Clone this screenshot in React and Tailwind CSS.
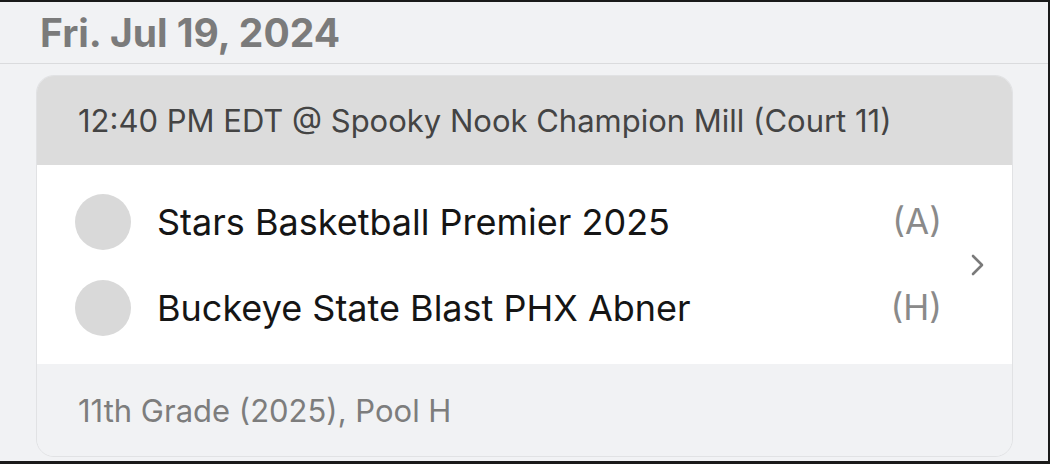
import React from 'react';

const teams = [
  { name: 'Stars Basketball Premier 2025', side: '(A)' },
  { name: 'Buckeye State Blast PHX Abner', side: '(H)' },
];

const App = () => {
  return (
    <div
      className="w-[1050px] h-[464px] bg-[#f1f2f4] border-t-2 border-r-2 border-b-[3px] border-[#1a1a1a] flex flex-col overflow-hidden"
      style={{ fontFamily: 'Inter, "Noto Sans", sans-serif' }}
    >
      {/* Date heading */}
      <div className="h-[62px] flex items-center pl-[40px] border-b border-[#dadbdd]">
        <h2 className="text-[39px] font-bold text-[#7b7b7b] leading-none">Fri. Jul 19, 2024</h2>
      </div>

      {/* Game card */}
      <div className="mt-[11px] ml-[36px] w-[977px] rounded-[18px] border border-[#e1e2e4] overflow-hidden flex flex-col">
        <div className="h-[89px] bg-[#dcdcdc] flex items-center pl-[41px]">
          <span className="text-[31px] text-[#444444] leading-none">12:40 PM EDT @ Spooky Nook Champion Mill (Court 11)</span>
        </div>

        <div className="bg-white flex items-center h-[199px]">
          <div className="flex-1 flex flex-col gap-[30px] pl-[38px]">
            {teams.map((t) => (
              <div key={t.name} className="flex items-center h-[56px]">
                <div className="w-[56px] h-[56px] rounded-full bg-[#d9d9d9] shrink-0"></div>
                <span className="ml-[26px] text-[36px] text-[#151515] leading-none">{t.name}</span>
                <span className="ml-auto text-[35px] text-[#8a8a8a] leading-none">{t.side}</span>
              </div>
            ))}
          </div>
          <div className="w-[70px] flex justify-center">
            <svg width="16" height="24" viewBox="0 0 16 24" fill="none">
              <path d="M4 3l9 9-9 9" stroke="#7a7a7a" strokeWidth="2.6" strokeLinecap="round" strokeLinejoin="round" />
            </svg>
          </div>
        </div>

        <div className="h-[92px] bg-[#f1f2f4] flex items-center pl-[41px]">
          <span className="text-[31px] text-[#7d7d7d] leading-none">11th Grade (2025), Pool H</span>
        </div>
      </div>
    </div>
  );
};

export default App;
